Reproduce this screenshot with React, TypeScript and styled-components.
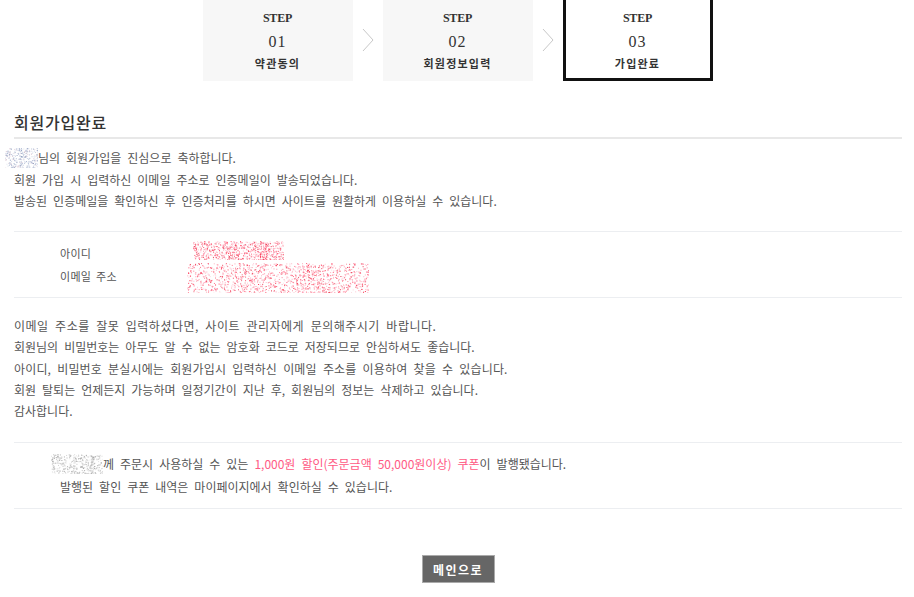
import React from 'react';
import styled, { createGlobalStyle } from 'styled-components';

const Global = createGlobalStyle`
  html, body { margin: 0; padding: 0; background: #fff; }
  body {
    font-family: "Noto Sans CJK KR", "Noto Sans", sans-serif;
    color: #555;
    font-size: 12px;
  }
`;

const Page = styled.div`
  padding: 0 12px 40px 14px;
`;

const Steps = styled.ol`
  display: flex;
  justify-content: center;
  align-items: center;
  list-style: none;
  margin: -3px 0 0 -1px;
  padding: 0;
`;

const StepBox = styled.li<{ $active?: boolean }>`
  box-sizing: border-box;
  width: 150px;
  height: 84px;
  padding-top: 11px;
  display: flex;
  flex-direction: column;
  align-items: center;
  background: ${(p) => (p.$active ? '#fff' : '#f7f7f7')};
  border: 3px solid ${(p) => (p.$active ? '#111' : '#f7f7f7')};
  color: #333;
`;

const StepLabel = styled.span`
  font-family: "Liberation Serif", serif;
  font-weight: 700;
  font-size: 12px;
  line-height: 14px;
  letter-spacing: -0.2px;
`;

const StepNum = styled.span`
  font-family: "Liberation Serif", serif;
  font-size: 16px;
  line-height: 20px;
  margin-top: 7px;
  letter-spacing: 1px;
`;

const StepName = styled.span`
  font-family: "Noto Sans CJK KR", sans-serif;
  font-weight: 700;
  font-size: 11px;
  line-height: 16px;
  margin-top: 3px;
  letter-spacing: 1.2px;
  color: #333;
`;

const Arrow = styled.li`
  width: 30px;
  display: flex;
  justify-content: center;
  padding-top: 2px;
`;

const Title = styled.h2`
  margin: 31px 0 0;
  padding-bottom: 5px;
  border-bottom: 2px solid #e8e8e8;
  font-size: 16px;
  line-height: 20px;
  font-weight: 500;
  color: #333;
  letter-spacing: 0.8px;
`;

const Para = styled.div<{ $top: number; $bottom: number; $lh: number }>`
  margin: ${(p) => p.$top}px 0 ${(p) => p.$bottom}px;
  line-height: ${(p) => p.$lh}px;
  font-size: 12px;
  word-spacing: 3.3px;
  color: #555;
`;

const Line = styled.p<{ $ls?: number }>`
  margin: 0;
  white-space: nowrap;
  letter-spacing: ${(p) => p.$ls ?? 0}px;
`;

const Block = styled.div<{ $pt: number; $pb: number }>`
  border-top: 1px solid #eceef1;
  border-bottom: 1px solid #eceef1;
  padding: ${(p) => p.$pt}px 0 ${(p) => p.$pb}px 46px;
`;

const InfoGrid = styled.dl`
  margin: 0;
  display: grid;
  grid-template-columns: 128px 1fr;
  grid-auto-rows: 23px;
  align-items: center;
  font-size: 11px;
  word-spacing: 2px;
  color: #555;
`;

const Term = styled.dt`
  margin: 0;
  letter-spacing: 0.3px;
`;

const Value = styled.dd`
  margin: 0;
  display: flex;
  align-items: center;
  height: 23px;
`;

const Coupon = styled.div`
  line-height: 23px;
  font-size: 12px;
  word-spacing: 3.3px;
  color: #555;
`;

const Pink = styled.span`
  color: #ff5a84;
`;

const Actions = styled.div`
  display: flex;
  justify-content: center;
  margin-top: 46px;
`;

const MainButton = styled.button`
  box-sizing: border-box;
  width: 73px;
  height: 28px;
  background: #666;
  border: 1px solid #aaa;
  color: #fff;
  font-family: "Noto Sans CJK KR", sans-serif;
  font-weight: 700;
  font-size: 12px;
  letter-spacing: 1.5px;
  padding: 0;
  cursor: pointer;
`;

const MaskWrap = styled.span<{ $ml: number; $mt: number }>`
  display: inline-block;
  vertical-align: middle;
  margin-left: ${(p) => p.$ml}px;
  margin-top: ${(p) => p.$mt}px;
  line-height: 0;
`;

function rng(seed: number) {
  let s = seed;
  return () => {
    s = (s * 9301 + 49297) % 233280;
    return s / 233280;
  };
}

const Redact: React.FC<{
  w: number;
  h: number;
  colors: string[];
  n: number;
  seed: number;
  ml?: number;
  mt?: number;
}> = ({ w, h, colors, n, seed, ml = 0, mt = 0 }) => {
  const r = rng(seed);
  const dots = Array.from({ length: n }, (_, i) => ({
    x: r() * w,
    y: r() * h,
    c: colors[Math.floor(r() * colors.length)],
    o: 0.35 + r() * 0.65,
    k: i,
  }));
  return (
    <MaskWrap $ml={ml} $mt={mt}>
      <svg width={w} height={h} viewBox={`0 0 ${w} ${h}`}>
        {dots.map((d) => (
          <rect key={d.k} x={d.x} y={d.y} width={1} height={1} fill={d.c} opacity={d.o} />
        ))}
      </svg>
    </MaskWrap>
  );
};

const Chevron = () => (
  <svg width="12" height="24" viewBox="0 0 12 24">
    <polyline points="1,1 11,12 1,23" fill="none" stroke="#c8c8c8" strokeWidth="1" />
  </svg>
);

const steps = [
  { num: '01', name: '약관동의' },
  { num: '02', name: '회원정보입력' },
  { num: '03', name: '가입완료' },
];

export default function App() {
  return (
    <>
      <Global />
      <Page>
        <Steps>
          {steps.map((s, i) => (
            <React.Fragment key={s.num}>
              {i > 0 && (
                <Arrow>
                  <Chevron />
                </Arrow>
              )}
              <StepBox $active={i === 2}>
                <StepLabel>STEP</StepLabel>
                <StepNum>{s.num}</StepNum>
                <StepName>{s.name}</StepName>
              </StepBox>
            </React.Fragment>
          ))}
        </Steps>

        <Title>회원가입완료</Title>

        <Para $top={8} $bottom={19} $lh={21.5}>
          <Line>
            <Redact w={33} h={20} n={260} seed={7} ml={-9} mt={-3} colors={['#9aa8c8', '#c8cfe0', '#7f8fb8', '#d0b8c8', '#b8c4d8']} />
            님의 회원가입을 진심으로 축하합니다.
          </Line>
          <Line>회원 가입 시 입력하신 이메일 주소로 인증메일이 발송되었습니다.</Line>
          <Line>발송된 인증메일을 확인하신 후 인증처리를 하시면 사이트를 원활하게 이용하실 수 있습니다.</Line>
        </Para>

        <Block $pt={9.5} $pb={9.5}>
          <InfoGrid>
            <Term>아이디</Term>
            <Value>
              <Redact w={91} h={19} n={700} seed={13} ml={5} mt={-5} colors={['#ff2a4a', '#ff7b9b', '#ffb0c0', '#e8304a', '#ff5070']} />
            </Value>
            <Term>이메일 주소</Term>
            <Value>
              <Redact w={182} h={30} n={1300} seed={29} ml={-1} mt={4} colors={['#ff2a4a', '#ff7b9b', '#ffb0c0', '#e8304a', '#ff5070']} />
            </Value>
          </InfoGrid>
        </Block>

        <Para $top={17.5} $bottom={21} $lh={21.25}>
          <Line $ls={0.5}>이메일 주소를 잘못 입력하셨다면, 사이트 관리자에게 문의해주시기 바랍니다.</Line>
          <Line>회원님의 비밀번호는 아무도 알 수 없는 암호화 코드로 저장되므로 안심하셔도 좋습니다.</Line>
          <Line $ls={0.15}>아이디, 비밀번호 분실시에는 회원가입시 입력하신 이메일 주소를 이용하여 찾을 수 있습니다.</Line>
          <Line>회원 탈퇴는 언제든지 가능하며 일정기간이 지난 후, 회원님의 정보는 삭제하고 있습니다.</Line>
          <Line>감사합니다.</Line>
        </Para>

        <Block $pt={8.5} $pb={10.5}>
          <Coupon>
            <Line>
              <Redact w={52} h={20} n={380} seed={41} ml={-9} mt={-3} colors={['#b0b0b0', '#d0d0d0', '#909090', '#c0c0c0']} />
              께 주문시 사용하실 수 있는 <Pink>1,000원 할인(주문금액 50,000원이상) 쿠폰</Pink>이 발행됐습니다.
            </Line>
            <Line>발행된 할인 쿠폰 내역은 마이페이지에서 확인하실 수 있습니다.</Line>
          </Coupon>
        </Block>

        <Actions>
          <MainButton type="button">메인으로</MainButton>
        </Actions>
      </Page>
    </>
  );
}
